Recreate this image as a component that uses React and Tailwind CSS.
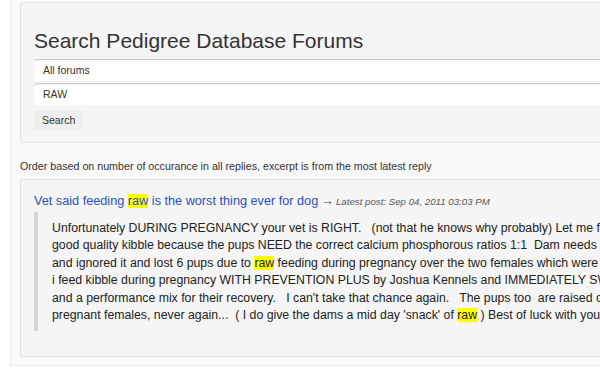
import React from "react";

function Hl({ children }) {
  return <span className="bg-[#ffff00]">{children}</span>;
}

const lines = [
  <>Unfortunately DURING PREGNANCY your vet is RIGHT.   (not that he knows why probably) Let me first explain what happened to me</>,
  <>good quality kibble because the pups NEED the correct calcium phosphorous ratios 1:1  Dam needs to keep her own levels up</>,
  <>and ignored it and lost 6 pups due to <Hl>raw</Hl> feeding during pregnancy over the two females which were expecting</>,
  <>i feed kibble during pregnancy WITH PREVENTION PLUS by Joshua Kennels and IMMEDIATELY SWITCH after whelping</>,
  <>and a performance mix for their recovery.   I can't take that chance again.   The pups too  are raised on it as well</>,
  <>pregnant females, never again...  ( I do give the dams a mid day 'snack' of <Hl>raw</Hl> ) Best of luck with your girl</>,
];

export default function App() {
  return (
    <div className="h-[369px] w-[600px] overflow-hidden bg-white font-['Liberation_Sans',Arial,sans-serif] text-[#333]">
      <div className="ml-[10px] h-[366px] w-[800px] border-l border-b border-[#ececec] bg-[#f9f9f9] pt-[2px]">
        {/* search panel */}
        <div className="ml-[9px] rounded-[3px] border border-[#e3e3e3] bg-[#f5f5f5] pl-[13px] pt-[25px] pb-[11px]">
          <h3 className="text-[21px] leading-[26px] text-[#333]">Search Pedigree Database Forums</h3>
          <div className="mt-[5px] flex flex-col gap-[2px]">
            <div className="h-[22px] rounded-l-[3px] border-t border-[#ccc] bg-white pl-[9px] text-[10.5px] leading-[21px] shadow-[inset_0_1px_1px_rgba(0,0,0,0.06)]">
              All forums
            </div>
            <div className="h-[22px] rounded-l-[3px] border-t border-[#ccc] bg-white pl-[9px] text-[10.5px] leading-[21px] shadow-[inset_0_1px_1px_rgba(0,0,0,0.06)]">
              RAW
            </div>
            <div>
              <button className="h-[20px] rounded-[2px] bg-[#eee] px-[8px] text-[10.5px] leading-[20px] text-[#333]">Search</button>
            </div>
          </div>
        </div>

        <p className="ml-[9px] mt-[16px] text-[10.7px] leading-[14px] text-[#333]">
          Order based on number of occurance in all replies, excerpt is from the most latest reply
        </p>

        {/* result */}
        <div className="ml-[9px] mt-[6px] h-[178px] rounded-[3px] border border-[#e3e3e3] bg-[#f5f5f5] pl-[13px] pt-[11px]">
          <div className="whitespace-nowrap text-[12.7px] leading-[20px]">
            <a className="text-[#2a4fbf]">Vet said feeding <Hl>raw</Hl> is the worst thing ever for dog</a>
            <span className="ml-[3px] text-[#444]">→</span>
            <span className="ml-[2px] text-[9.7px] italic text-[#555]">Latest post: Sep 04, 2011 03:03 PM</span>
          </div>
          <div className="border-l-[4px] border-[#d5d5d5] pl-[14px] pt-[8px] pb-[7px]">
            {lines.map((l, i) => (
              <div key={i} className="whitespace-pre text-[12.3px] leading-[17.4px] text-[#222]">
                {l}
              </div>
            ))}
          </div>
        </div>
      </div>
    </div>
  );
}
